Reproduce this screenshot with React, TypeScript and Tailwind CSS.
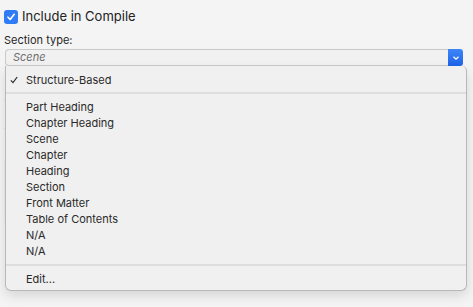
import React from "react";

const items = [
  "Part Heading",
  "Chapter Heading",
  "Scene",
  "Chapter",
  "Heading",
  "Section",
  "Front Matter",
  "Table of Contents",
  "N/A",
  "N/A",
];

const MenuItem = ({ label, checked }: { label: string; checked?: boolean }) => (
  <div className="h-[16px] flex items-center text-[11px] leading-[16px] text-[#2a2a2a]">
    <span className="w-[20px] pl-[4px] flex items-center">
      {checked && (
        <svg width="8" height="8" viewBox="0 0 8 8">
          <path d="M0.8 4.3 L3 6.6 L7.2 1" stroke="#2a2a2a" strokeWidth="1.2" fill="none" />
        </svg>
      )}
    </span>
    <span>{label}</span>
  </div>
);

const App = () => {
  return (
    <div
      className="w-[473px] h-[307px] bg-[#f4f4f4] relative overflow-hidden"
      style={{ fontFamily: "Inter, 'Noto Sans', sans-serif" }}
    >
      <div className="pt-[10px] pl-[4px] pr-[10px]">
        {/* checkbox row */}
        <div className="flex items-center gap-[4px] h-[14px]">
          <div className="w-[14px] h-[14px] rounded-[3px] bg-[#2f7cf6] flex items-center justify-center">
            <svg width="10" height="10" viewBox="0 0 10 10">
              <path d="M2 5.2 L4.2 7.5 L8.2 2.3" stroke="white" strokeWidth="1.6" fill="none" strokeLinecap="round" strokeLinejoin="round" />
            </svg>
          </div>
          <span className="text-[13px] text-[#222]">Include in Compile</span>
        </div>
        <div className="mt-[9px] text-[11px] leading-[14px] text-[#262626]">Section type:</div>
        {/* select */}
        <div className="mt-[2px] ml-[1px] flex h-[17px] w-[458px]">
          <div className="flex-1 flex items-center pl-[7px] border border-[#c9c9c9] border-r-0 rounded-l-[4px] bg-[#f1f1f1] text-[11px] italic text-[#6e6e6e]">
            Scene
          </div>
          <div className="w-[15px] rounded-r-[3px] bg-gradient-to-b from-[#3c86f7] to-[#1f62e8] flex items-center justify-center">
            <svg width="8" height="6" viewBox="0 0 8 6">
              <path d="M1.5 1.8 L4 4.2 L6.5 1.8" stroke="white" strokeWidth="1.3" fill="none" />
            </svg>
          </div>
        </div>
        {/* faint background rows */}
        <div className="mt-[34px] border-t border-[#e2e2e2]" />
        <div className="mt-[27px] border-t border-[#e2e2e2]" />
        <div className="mt-[31px] h-[62px] bg-[#efefef]" />
      </div>

      {/* popup menu */}
      <div className="absolute left-[5px] top-[66px] w-[462px] h-[225px] bg-[#f0f0f0] border border-[#b8b8b8] border-t-0 rounded-b-[6px] rounded-tr-[5px] shadow-[0_5px_12px_rgba(0,0,0,0.12)] pt-[5px]">
        <div className="h-[18px] flex items-center">
          <div className="w-full">
            <MenuItem label="Structure-Based" checked />
          </div>
        </div>
        <div className="mt-[3px] h-[2px] bg-[#dedede]" />
        <div className="pt-[5px]">
          {items.map((it, i) => (
            <MenuItem key={i} label={it} />
          ))}
        </div>
        <div className="mt-[5px] h-[2px] bg-[#dedede]" />
        <div className="pt-[5px]">
          <MenuItem label="Edit..." />
        </div>
      </div>
    </div>
  );
};

export default App;
